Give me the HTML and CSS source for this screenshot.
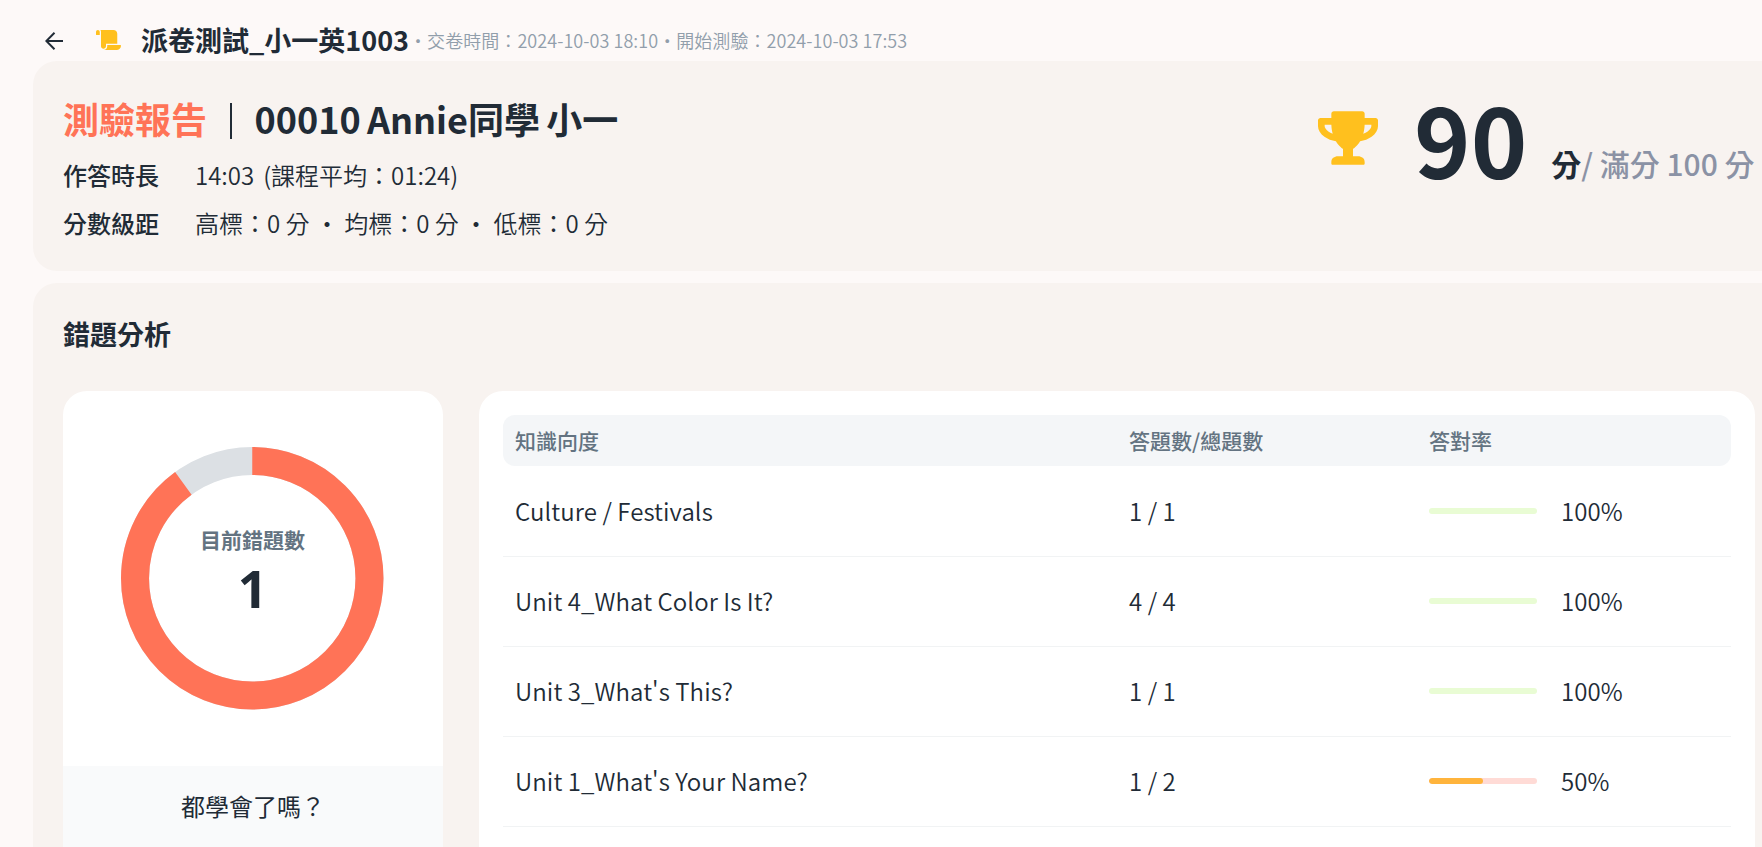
FILE: index.html
```html
<!DOCTYPE html>
<html lang="zh-Hant">
<head>
<meta charset="utf-8">
<title>測驗報告</title>
<link rel="stylesheet" href="styles.css">
</head>
<body>
<header class="topbar">
  <svg class="back" viewBox="0 0 18 18"><path d="M18 9H1.500M9.500 .8L1.300 9l8.200 8.200" fill="none" stroke="#212b36" stroke-width="2"/></svg>
  <svg class="scroll" viewBox="0 0 640 512"><path fill="#ffc01e" d="M48 0C21.53 0 0 21.53 0 48v64c0 8.84 7.16 16 16 16h80V48C96 21.53 74.47 0 48 0zm208 412.57V352h288V96c0-52.94-43.06-96-96-96H111.59C121.74 13.41 128 29.92 128 48v368c0 38.87 34.65 69.65 74.75 63.12C234.22 474 256 444.46 256 412.57zM288 384v32c0 52.93-43.06 96-96 96h336c61.86 0 112-50.14 112-112 0-8.84-7.16-16-16-16H288z"/></svg>
  <h1 class="quiz-name">派卷測試_小一英1003</h1>
  <span class="meta">・交卷時間：2024-10-03 18:10・開始測驗：2024-10-03 17:53</span>
</header>

<section class="panel summary">
  <div class="info">
    <div class="title-row">
      <span class="report">測驗報告</span>
      <span class="divider"></span>
      <span class="student">00010 Annie同學 小一</span>
    </div>
    <div class="info-row"><span class="label">作答時長</span><span class="value"><span class="time">14:03</span>(課程平均：01:24)</span></div>
    <div class="info-row"><span class="label">分數級距</span><span class="value">高標：0 分 ・ 均標：0 分 ・ 低標：0 分</span></div>
  </div>
  <div class="score">
    <svg class="trophy" viewBox="0 0 576 512"><path fill="#ffc01e" d="M552 64H448V24c0-13.3-10.7-24-24-24H152c-13.3 0-24 10.7-24 24v40H24C10.7 64 0 74.7 0 88v56c0 35.7 22.5 72.500 61.900 100.700 31.500 22.700 69.800 37.100 110 41.700C203.300 338.500 240 360 240 360v72h-48c-35.300 0-64 20.700-64 56v12c0 6.600 5.400 12 12 12h296c6.600 0 12-5.400 12-12v-12c0-35.300-28.700-56-64-56h-48v-72s36.700-21.500 68.100-73.600c40.300-4.600 78.600-19 110-41.700 39.300-28.300 61.900-65 61.900-100.700V88c0-13.300-10.700-24-24-24zM99.300 192.800C74.900 175.200 64 155.600 64 144v-16h64.200c1 32.600 5.800 61.200 12.800 86.200-15.100-5.200-29.200-12.400-41.700-21.400zM512 144c0 16.100-17.700 36.100-35.300 48.800-12.500 9-26.700 16.200-41.800 21.400 7-25 11.800-53.600 12.800-86.200H512v16z"/></svg>
    <span class="points">90</span>
    <span class="unit">分<span class="total">/ 滿分 100 分</span></span>
  </div>
</section>

<section class="panel analysis">
  <h2 class="heading">錯題分析</h2>
  <div class="columns">
    <div class="card chart-card">
      <div class="chart">
        <svg class="donut" viewBox="0 0 262 262">
          <circle cx="131" cy="131" r="117" fill="none" stroke="#dce0e4" stroke-width="28"/>
          <circle cx="131" cy="131" r="117" fill="none" stroke="#ff7357" stroke-width="28" pathLength="100" stroke-dasharray="90 10" transform="rotate(-90 131 131)"/>
        </svg>
        <div class="chart-text">
          <span class="chart-label">目前錯題數</span>
          <span class="chart-value">1</span>
        </div>
      </div>
      <div class="chart-foot">都學會了嗎？</div>
    </div>
    <div class="card table-card">
      <div class="row head"><span>知識向度</span><span>答題數/總題數</span><span>答對率</span></div>
      <div class="row"><span>Culture / Festivals</span><span>1 / 1</span><span class="rate"><i class="bar full"></i>100%</span></div>
      <div class="row"><span>Unit 4_What Color Is It?</span><span>4 / 4</span><span class="rate"><i class="bar full"></i>100%</span></div>
      <div class="row"><span>Unit 3_What's This?</span><span>1 / 1</span><span class="rate"><i class="bar full"></i>100%</span></div>
      <div class="row"><span>Unit 1_What's Your Name?</span><span>1 / 2</span><span class="rate"><i class="bar"><i class="fill" style="width:50%"></i></i>50%</span></div>
    </div>
  </div>
</section>
</body>
</html>
```
FILE: styles.css
```css
* { box-sizing: border-box; }
html { height: 100%; overflow: hidden; }
body {
  display: flex;
  flex-direction: column;
  margin: 0;
  height: 847px;
  overflow: hidden;
  background: #fdf9f8;
  color: #212b36;
  font-family: "Noto Sans CJK TC", sans-serif;
  font-size: 24px;
  font-weight: 350;
}
.topbar { display: flex; align-items: center; flex: none; height: 61px; padding: 20px 0 0 45px; }
.back { width: 18px; height: 18px; flex: none; }
.scroll { width: 25px; height: 20px; margin: 0 0 1px 33px; flex: none; }
.quiz-name { margin: 0 0 2px 20px; font-size: 27px; line-height: 38px; font-weight: 700; white-space: nowrap; }
.meta { margin-bottom: 2px; font-size: 18px; line-height: 38px; letter-spacing: .06px; color: #919eab; white-space: nowrap; }

.panel { width: 1752px; margin-left: 33px; background: #f8f3f0; border-radius: 24px; }
.summary { display: flex; flex: none; height: 210px; padding: 26px 0 0 30px; }
.info { width: 1255px; flex: none; }
.title-row { display: flex; align-items: center; height: 61px; margin-bottom: 2px; font-size: 36px; font-weight: 700; white-space: nowrap; }
.report { color: #ff7357; }
.student { word-spacing: -2px; }
.divider { width: 1.500px; height: 36px; margin: 6px 23px 0 23px; background: #212b36; }
.info-row { display: flex; align-items: center; height: 48px; white-space: nowrap; }
.label { width: 132px; font-weight: 500; }
.time { margin-right: 9px; }
.score { display: flex; height: 110px; white-space: nowrap; }
.trophy { width: 60px; height: 54px; margin-top: 24px; flex: none; }
.points { margin-left: 36px; font-size: 96px; line-height: 102px; font-weight: 700; }
.unit { margin-left: 24px; margin-top: 54px; font-size: 30px; line-height: 44px; font-weight: 700; }
.total { color: #8b92a5; font-weight: 500; }

.analysis { flex: 1; margin-top: 12px; padding: 30px 30px 0; border-radius: 24px 24px 0 0; }
.heading { margin: 0; font-size: 27px; line-height: 42px; font-weight: 700; }
.columns { display: flex; gap: 36px; margin-top: 36px; height: 456px; }
.card { background: #fff; border-radius: 24px 24px 0 0; overflow: hidden; }
.chart-card { width: 380px; }
.chart { display: grid; place-items: center; height: 375px; padding-right: 1px; }
.donut { grid-area: 1 / 1; width: 262.500px; height: 262.500px; }
.chart-text { grid-area: 1 / 1; display: flex; flex-direction: column; align-items: center; margin-top: -12px; }
.chart-label { font-size: 21px; line-height: 30px; font-weight: 700; color: #637381; }
.chart-value { font: 700 52px/67px "Noto Sans", sans-serif; }
.chart-foot { height: 81px; padding-top: 23px; background: #f9fafb; text-align: center; line-height: 34px; font-weight: 400; }

.table-card { width: 1276px; padding: 24px 24px 0; }
.row { display: grid; grid-template-columns: 614px 300px 1fr; align-items: center; height: 90px; padding: 0 12px; border-bottom: 1px solid #f1f3f4; letter-spacing: .08px; white-space: nowrap; }
.head { height: 51px; margin-bottom: 1px; border: 0; border-radius: 12px; background: #f4f6f8; color: #637381; font-size: 21px; line-height: 29px; font-weight: 500; letter-spacing: 0; }
.row:not(.head) > * { margin-top: -2px; }
.rate { display: flex; align-items: center; }
.bar { width: 108px; height: 6px; margin-right: 24px; border-radius: 3px; overflow: hidden; background: #ffdbd6; }
.full { background: #e9fcd4; }
.fill { display: block; height: 6px; border-radius: 3px; background: #ffb43c; }
```
